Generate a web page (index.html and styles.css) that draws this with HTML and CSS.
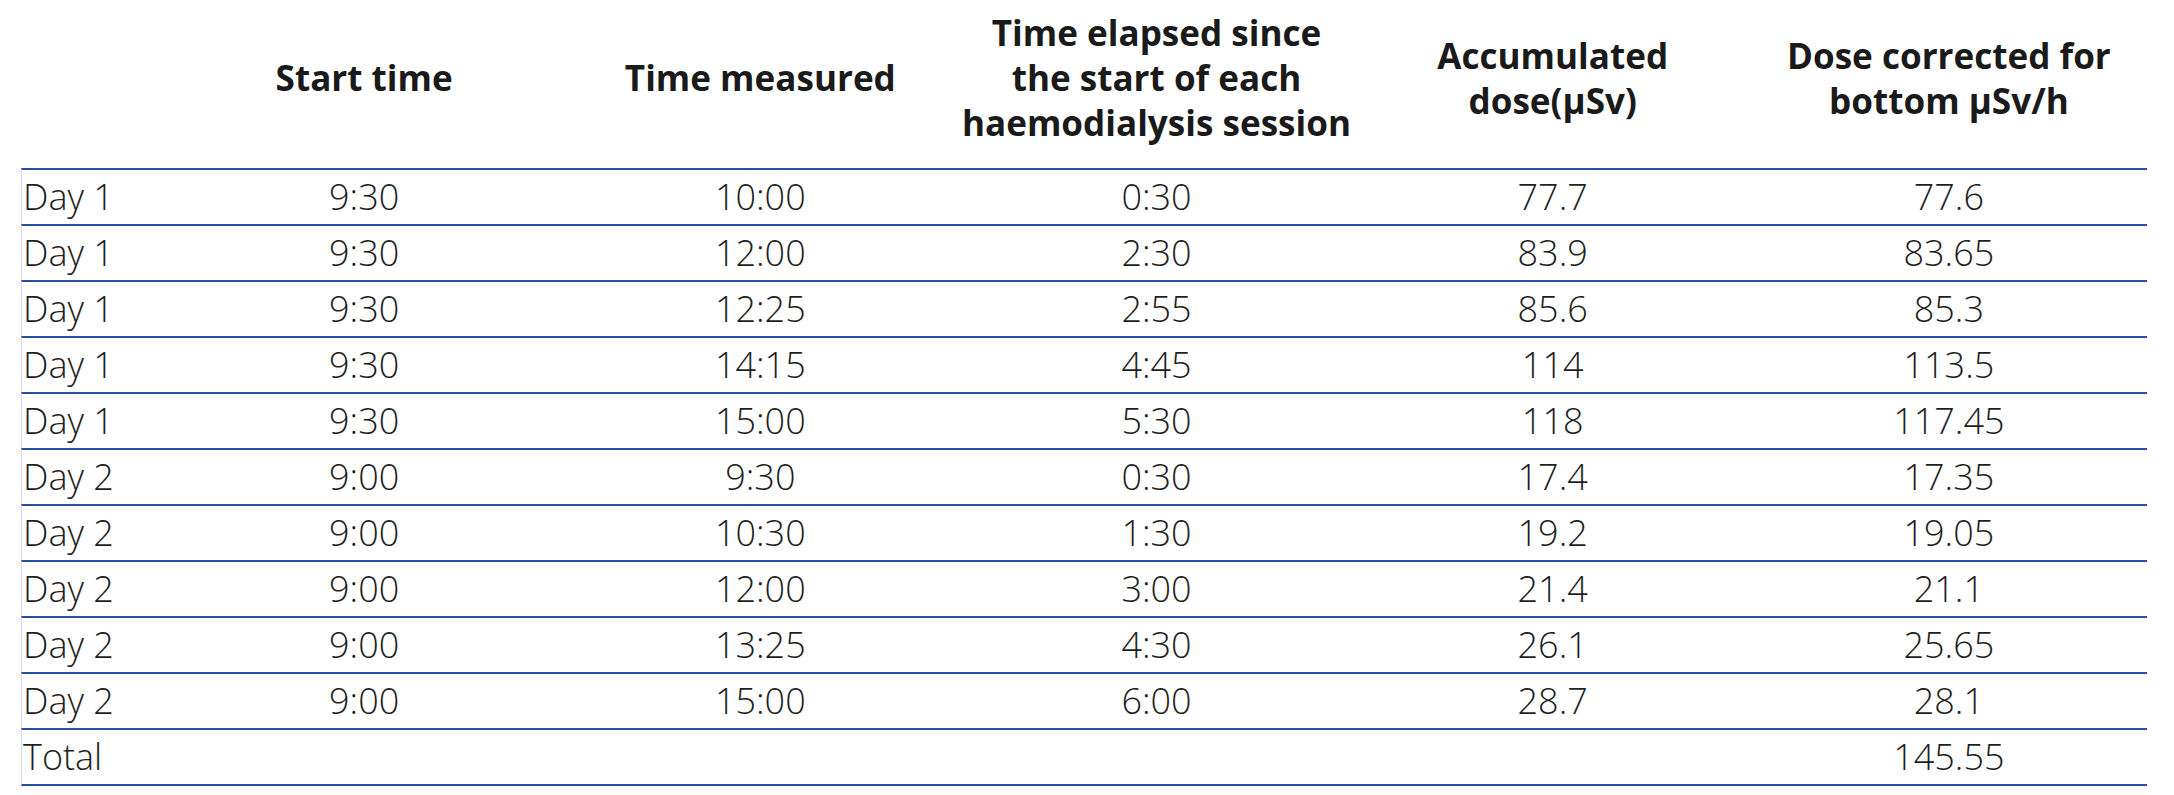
FILE: index.html
```html
<!DOCTYPE html>
<html lang="en">
<head>
<meta charset="utf-8">
<title>Accumulated dose table</title>
<link rel="stylesheet" href="styles.css">
</head>
<body>
<table class="dose-table">
  <colgroup>
    <col class="c-day">
    <col class="c-col">
    <col class="c-col">
    <col class="c-col">
    <col class="c-col">
    <col class="c-col">
  </colgroup>
  <thead>
    <tr>
      <th></th>
      <th>Start time</th>
      <th>Time measured</th>
      <th><span class="hl">Time elapsed since</span><span class="hl">the start of each</span><span class="hl">haemodialysis session</span></th>
      <th><span class="hl">Accumulated</span><span class="hl">dose(μSv)</span></th>
      <th><span class="hl">Dose corrected for</span><span class="hl">bottom μSv/h</span></th>
    </tr>
  </thead>
  <tbody>
    <tr><td>Day 1</td><td>9:30</td><td>10:00</td><td>0:30</td><td>77.7</td><td>77.6</td></tr>
    <tr><td>Day 1</td><td>9:30</td><td>12:00</td><td>2:30</td><td>83.9</td><td>83.65</td></tr>
    <tr><td>Day 1</td><td>9:30</td><td>12:25</td><td>2:55</td><td>85.6</td><td>85.3</td></tr>
    <tr><td>Day 1</td><td>9:30</td><td>14:15</td><td>4:45</td><td>114</td><td>113.5</td></tr>
    <tr><td>Day 1</td><td>9:30</td><td>15:00</td><td>5:30</td><td>118</td><td>117.45</td></tr>
    <tr><td>Day 2</td><td>9:00</td><td>9:30</td><td>0:30</td><td>17.4</td><td>17.35</td></tr>
    <tr><td>Day 2</td><td>9:00</td><td>10:30</td><td>1:30</td><td>19.2</td><td>19.05</td></tr>
    <tr><td>Day 2</td><td>9:00</td><td>12:00</td><td>3:00</td><td>21.4</td><td>21.1</td></tr>
    <tr><td>Day 2</td><td>9:00</td><td>13:25</td><td>4:30</td><td>26.1</td><td>25.65</td></tr>
    <tr><td>Day 2</td><td>9:00</td><td>15:00</td><td>6:00</td><td>28.7</td><td>28.1</td></tr>
    <tr class="total"><td>Total</td><td></td><td></td><td></td><td></td><td>145.55</td></tr>
  </tbody>
</table>
</body>
</html>
```

FILE: styles.css
```css
html, body {
  margin: 0;
  padding: 0;
  background: #ffffff;
}

body {
  padding: 0 27px 0 21px;
  font-family: "Open Sans", "Noto Sans", "Liberation Sans", sans-serif;
  color: #1e1e1e;
}

.dose-table {
  border-collapse: separate;
  border-spacing: 0;
  width: 2126px;
  table-layout: fixed;
}

.c-day { width: 145px; }
.c-col { width: 396px; }

.dose-table th {
  font-weight: 700;
  font-size: 35.1px;
  line-height: 45px;
  color: #1a1a1a;
  text-align: center;
  vertical-align: middle;
  padding: 10px 0 23px 0;
  white-space: nowrap;
}

.hl {
  display: block;
  height: 45px;
  line-height: 45px;
}

.dose-table td {
  font-weight: 300;
  font-size: 36px;
  line-height: 54px;
  height: 54px;
  padding: 0;
  text-align: center;
  vertical-align: middle;
  border-top: 2px solid #24519e;
  color: #1e1e1e;
  white-space: nowrap;
}

.dose-table td:first-child {
  text-align: left;
  padding-left: 1px;
  border-left: 1px solid #d3def0;
}

.dose-table tr.total td {
  border-bottom: 2px solid #24519e;
}
```
